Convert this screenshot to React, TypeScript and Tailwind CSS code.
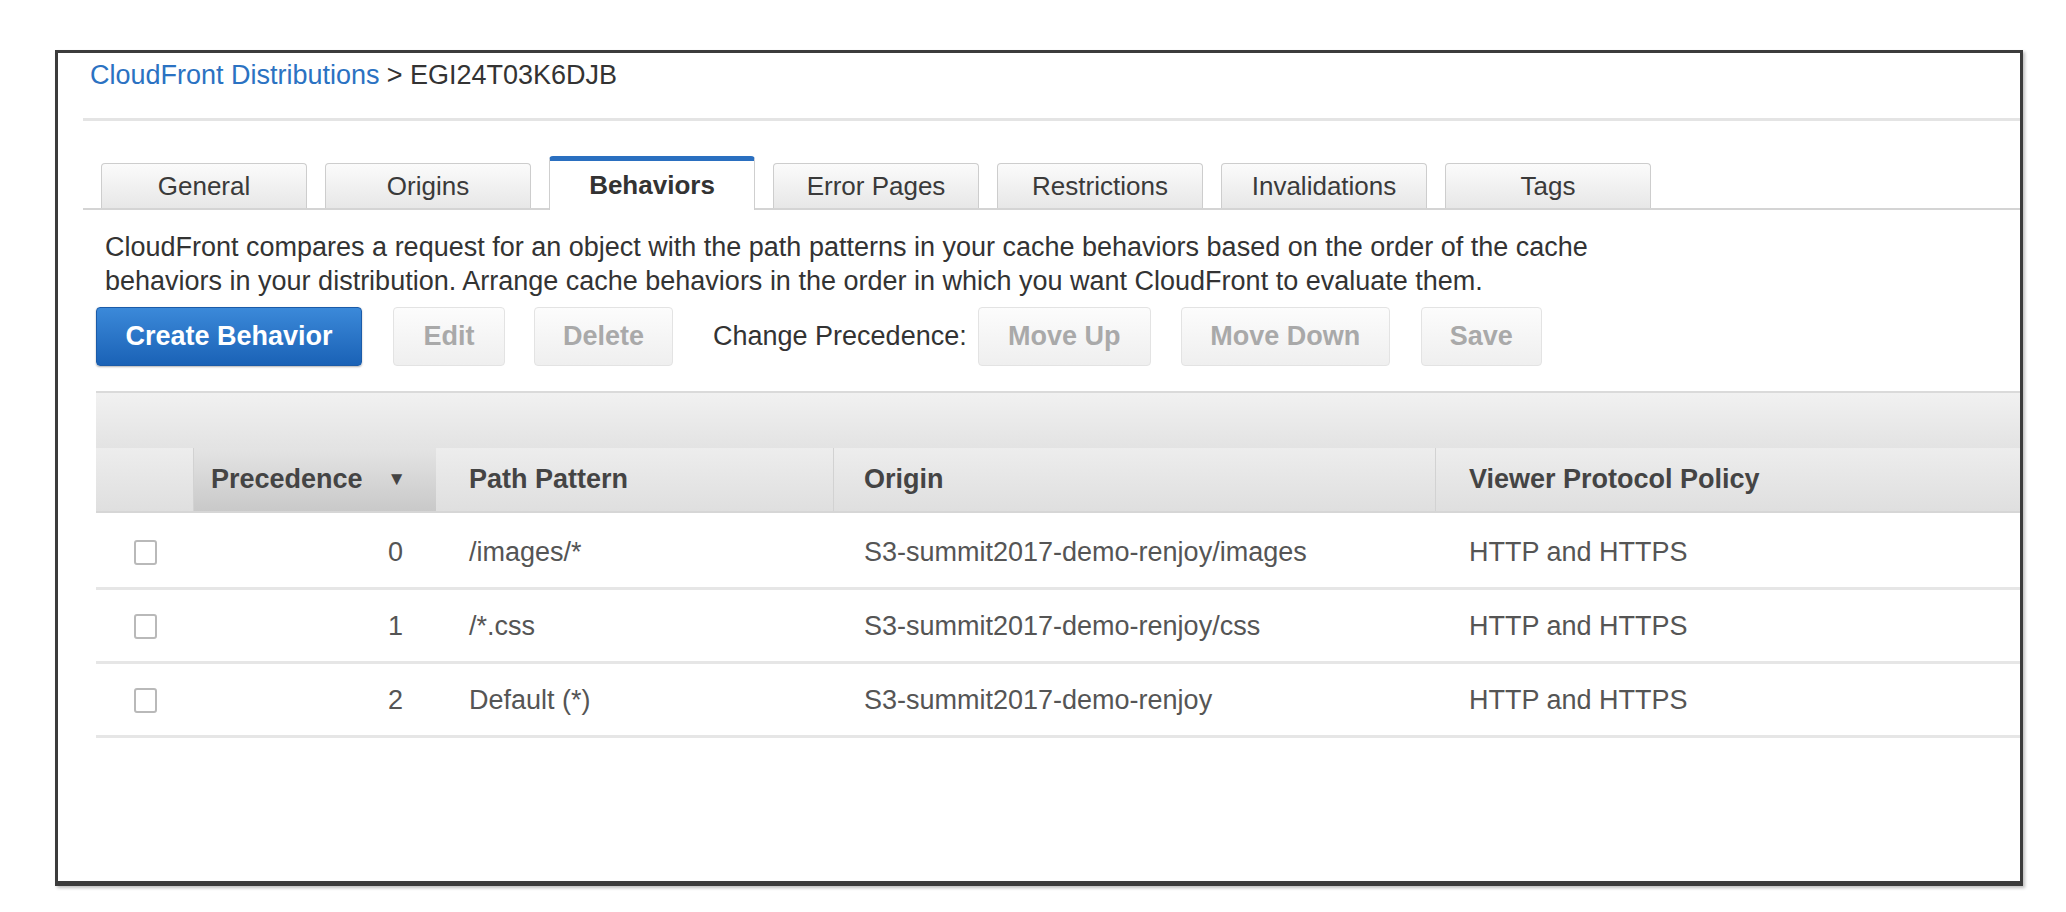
import React from "react";

const tabs = ["General", "Origins", "Behaviors", "Error Pages", "Restrictions", "Invalidations", "Tags"];

const rows = [
  { n: "0", path: "/images/*", origin: "S3-summit2017-demo-renjoy/images", vpp: "HTTP and HTTPS" },
  { n: "1", path: "/*.css", origin: "S3-summit2017-demo-renjoy/css", vpp: "HTTP and HTTPS" },
  { n: "2", path: "Default (*)", origin: "S3-summit2017-demo-renjoy", vpp: "HTTP and HTTPS" },
];

function DisabledBtn({ label, w }: { label: string; w: string }) {
  return (
    <div
      className={`${w} h-[59px] flex items-center justify-center rounded-[4px] border border-[#e3e3e3] bg-gradient-to-b from-[#fcfcfc] to-[#efefef] text-[#a9a9a9] font-bold text-[27px]`}
    >
      {label}
    </div>
  );
}

export default function App() {
  return (
    <div
      className="w-[2066px] h-[912px] bg-white overflow-hidden"
      style={{ fontFamily: '"Liberation Sans", Arial, sans-serif' }}
    >
      <div className="ml-[55px] mt-[50px] w-[1968px] h-[836px] border-[3px] border-[#3c3c3c] border-b-[5px] bg-white flex flex-col overflow-hidden shadow-[2px_2px_3px_rgba(0,0,0,0.25)]">
        {/* breadcrumb */}
        <div className="h-[44px] pl-[32px] flex items-center text-[27px] text-[#333]">
          <span className="text-[#2b72c2]">CloudFront Distributions</span>
          <span className="ml-[7px]">&gt; EGI24T03K6DJB</span>
        </div>
        <div className="ml-[25px] mt-[21px] h-[3px] bg-[#e4e4e4]" />

        {/* tabs */}
        <div className="ml-[25px] mt-[34px] h-[55px] pl-[18px] flex items-end gap-[18px] border-b-[2px] border-[#d4d4d4]">
          {tabs.map((t) =>
            t === "Behaviors" ? (
              <div
                key={t}
                className="w-[206px] h-[54px] -mb-[2px] flex items-center justify-center bg-white border-t-[5px] border-t-[#2a6fc0] border-x border-x-[#cfcfcf] rounded-t-[4px] text-[26px] font-bold text-[#333]"
              >
                {t}
              </div>
            ) : (
              <div
                key={t}
                className="w-[206px] h-[45px] flex items-center justify-center bg-gradient-to-b from-[#fbfbfb] to-[#e7e7e7] border border-[#cdcdcd] border-b-0 rounded-t-[4px] text-[26px] text-[#3a3a3a]"
              >
                {t}
              </div>
            )
          )}
        </div>

        {/* description */}
        <div className="mt-[20px] pl-[47px] text-[27px] leading-[34px] text-[#333]">
          <div>CloudFront compares a request for an object with the path patterns in your cache behaviors based on the order of the cache</div>
          <div>behaviors in your distribution. Arrange cache behaviors in the order in which you want CloudFront to evaluate them.</div>
        </div>

        {/* buttons */}
        <div className="mt-[9px] pl-[38px] flex items-center">
          <div className="w-[266px] h-[59px] flex items-center justify-center rounded-[4px] border border-[#1b5ba8] bg-gradient-to-b from-[#3b89d9] to-[#1a62b6] text-white font-bold text-[27px] shadow-[0_1px_2px_rgba(0,0,0,0.3)]">
            Create Behavior
          </div>
          <div className="ml-[31px]"><DisabledBtn label="Edit" w="w-[112px]" /></div>
          <div className="ml-[29px]"><DisabledBtn label="Delete" w="w-[139px]" /></div>
          <div className="ml-[40px] text-[27px] text-[#333]">Change Precedence:</div>
          <div className="ml-[11px]"><DisabledBtn label="Move Up" w="w-[173px]" /></div>
          <div className="ml-[30px]"><DisabledBtn label="Move Down" w="w-[209px]" /></div>
          <div className="ml-[31px]"><DisabledBtn label="Save" w="w-[121px]" /></div>
        </div>

        {/* table */}
        <div className="mt-[25px] ml-[38px]">
          <div className="h-[57px] bg-gradient-to-b from-[#f1f1f1] to-[#e3e3e3] border-t-2 border-[#dadada]" />
          <div className="h-[65px] flex text-[27px] font-bold text-[#444] bg-gradient-to-b from-[#ededed] to-[#dfdfdf] border-b-2 border-[#d6d6d6]">
            <div className="w-[98px] border-r border-[#d2d2d2]" />
            <div className="w-[242px] flex items-center pl-[17px] pr-[30px] bg-gradient-to-b from-[#e4e4e4] to-[#c9c9c9]">
              <span>Precedence</span>
              <span className="ml-auto text-[19px]">▼</span>
            </div>
            <div className="w-[398px] flex items-center pl-[33px] border-r border-[#d2d2d2]">Path Pattern</div>
            <div className="w-[602px] flex items-center pl-[30px] border-r border-[#d2d2d2]">Origin</div>
            <div className="flex-1 flex items-center pl-[33px]">Viewer Protocol Policy</div>
          </div>
          {rows.map((r, i) => (
            <div key={r.n} className={`${i === 0 ? "h-[77px] pt-[4px]" : "h-[74px] pt-[2px]"} flex items-center text-[27px] text-[#555] border-b-[3px] border-[#e6e6e6]`}>
              <div className="w-[98px] flex justify-center">
                <div className="w-[23px] h-[25px] rounded-[3px] border-2 border-[#b9b9b9] bg-white" />
              </div>
              <div className="w-[242px] text-right pr-[33px]">{r.n}</div>
              <div className="w-[398px] pl-[33px]">{r.path}</div>
              <div className="w-[602px] pl-[30px]">{r.origin}</div>
              <div className="flex-1 pl-[33px]">{r.vpp}</div>
            </div>
          ))}
        </div>
      </div>
    </div>
  );
}
